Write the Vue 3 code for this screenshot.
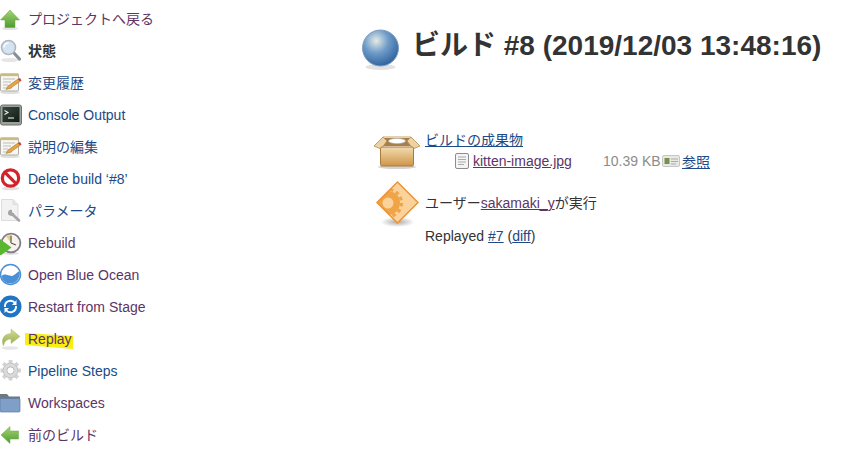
<template>
  <div class="page">
    <aside class="side">
      <div v-for="item in tasks" :key="item.label" class="task">
        <span class="ico">
          <svg v-if="item.icon === 'up'" viewBox="0 0 24 24" width="24" height="24">
            <defs><linearGradient id="gr" x1="0" y1="0" x2="0" y2="1"><stop offset="0" stop-color="#a4d676"/><stop offset="1" stop-color="#4f9a2e"/></linearGradient></defs>
            <ellipse cx="10" cy="21.5" rx="8" ry="1.6" fill="#e2e2e2"/>
            <path d="M10 3 L19.5 13 H15 V20.5 H5 V13 H.5 Z" fill="url(#gr)" stroke="#6aa845" stroke-width=".5"/>
          </svg>
          <svg v-else-if="item.icon === 'search'" viewBox="0 0 24 24" width="24" height="24">
            <ellipse cx="10" cy="21" rx="9" ry="2" fill="#e6e6e6"/>
            <path d="M13 13 L19.5 20" stroke="#8a8f94" stroke-width="3.2" stroke-linecap="round"/>
            <circle cx="8.5" cy="8.5" r="7" fill="#d4e3f3" stroke="#b0b8be" stroke-width="1.6"/>
            <path d="M4 8.5a4.5 4.5 0 0 1 4.5-4.5" fill="none" stroke="#fff" stroke-width="1.4"/>
          </svg>
          <svg v-else-if="item.icon === 'notes'" viewBox="0 0 24 24" width="24" height="24">
            <ellipse cx="10" cy="21.5" rx="10" ry="1.6" fill="#e0e0e0"/>
            <rect x="0.5" y="3" width="18" height="17" rx="1" fill="#f6f6f2" stroke="#aeaea6"/>
            <rect x="0.5" y="2.5" width="18" height="2.6" fill="#cdbb7e"/>
            <path d="M3 8h12M3 11h8M3 14h5M3 17h9" stroke="#bcbcbc"/>
            <path d="M6 18.5 L8 15 L18 8 L20 10.5 L10 17.5 Z" fill="#e2a548" stroke="#a86c20" stroke-width=".5"/>
            <path d="M18 8 L20 10.5 L21.5 9.5 L20 7 Z" fill="#d9363a"/>
          </svg>
          <svg v-else-if="item.icon === 'term'" viewBox="0 0 24 24" width="24" height="24">
            <defs><linearGradient id="scr" x1="0" y1="0" x2="1" y2="1"><stop offset="0" stop-color="#39493f"/><stop offset="1" stop-color="#121a15"/></linearGradient></defs>
            <rect x="0.5" y="2" width="21" height="20" rx="2" fill="#9ba19b" stroke="#6c726c"/>
            <rect x="2.5" y="4" width="17" height="15" fill="url(#scr)"/>
            <path d="M4.5 7.5 L8 9.5 L4.5 11.5" fill="none" stroke="#e8efe8" stroke-width="1.1"/>
            <path d="M8 15h6" stroke="#e8efe8" stroke-width="1.1"/>
            <path d="M13 20.5h2" stroke="#7ac060"/>
          </svg>
          <svg v-else-if="item.icon === 'stop'" viewBox="0 0 24 24" width="24" height="24">
            <ellipse cx="10.5" cy="21.5" rx="9" ry="1.8" fill="#e0e0e0"/>
            <circle cx="10.5" cy="11" r="8.2" fill="#fff" stroke="#d2232a" stroke-width="3.2"/>
            <path d="M4.7 5.2 L16.3 16.8" stroke="#d2232a" stroke-width="3.2"/>
          </svg>
          <svg v-else-if="item.icon === 'param'" viewBox="0 0 24 24" width="24" height="24">
            <path d="M1.5 .5 H13 L18 5.5 V21.5 H1.5 Z" fill="#f2f2f2" stroke="#dcdcdc"/>
            <path d="M13 .5 V5.5 H18" fill="#e6e6e6" stroke="#dcdcdc"/>
            <path d="M11 14 L19 21.5" stroke="#a4a4a4" stroke-width="2.6" stroke-linecap="round"/>
            <path d="M12 11 A3 3 0 1 0 14 14 L12 14 Z" fill="#a4a4a4"/>
          </svg>
          <svg v-else-if="item.icon === 'rebuild'" viewBox="0 0 24 24" width="24" height="24">
            <ellipse cx="11" cy="22.5" rx="8" ry="1.4" fill="#e0e0e0"/>
            <circle cx="11" cy="12" r="9.4" fill="#f5f3ea" stroke="#7f7d8c" stroke-width="1.8"/>
            <path d="M11 12 L6 5 L12 3.5 Z" fill="#e6cf7a"/>
            <path d="M11 12 L11 5M11 12 L16 14" stroke="#555" stroke-width="1.1"/>
            <path d="M0 8 L11.5 16.5 L0 25 Z" fill="#58b62f"/>
          </svg>
          <svg v-else-if="item.icon === 'ocean'" viewBox="0 0 24 24" width="24" height="24">
            <circle cx="10.5" cy="11.5" r="10" fill="#fff" stroke="#4a90d9" stroke-width="1.5"/>
            <path d="M1.5 13 C6 9 10 15 14 12 C16 10.5 18 9 19.5 8 C21 14 16.5 20.5 10.5 20.5 C5.5 20.5 2 17 1.5 13 Z" fill="#4a90d9"/>
          </svg>
          <svg v-else-if="item.icon === 'restart'" viewBox="0 0 24 24" width="24" height="24">
            <circle cx="10.5" cy="11.5" r="11" fill="#1f75c4"/>
            <path d="M5 12 A5.6 5.6 0 0 1 15 8" fill="none" stroke="#fff" stroke-width="1.9"/>
            <path d="M16.5 5 V10 H12 Z" fill="#fff"/>
            <path d="M16 11 A5.6 5.6 0 0 1 6 15" fill="none" stroke="#fff" stroke-width="1.9"/>
            <path d="M4.5 18 V13 H9 Z" fill="#fff"/>
          </svg>
          <svg v-else-if="item.icon === 'replay'" viewBox="0 0 24 24" width="24" height="24">
            <defs><linearGradient id="rp" x1="0" y1="0" x2="0" y2="1"><stop offset="0" stop-color="#d6dc92"/><stop offset="1" stop-color="#8fac4e"/></linearGradient></defs>
            <ellipse cx="10" cy="21" rx="8.5" ry="1.8" fill="#e6e6e6"/>
            <path d="M11 2 L20 9.5 L11 16.5 V12 C7 12 4.5 14 3.5 19 C1 13 3 7 11 6.5 Z" fill="url(#rp)" stroke="#adbc70" stroke-width=".5"/>
          </svg>
          <svg v-else-if="item.icon === 'gear'" viewBox="0 0 24 24" width="24" height="24">
            <path d="M10.5 1V21.5M.5 11.5H21M3.2 4.2L17.8 18.8M17.8 4.2L3.2 18.8" stroke="#d4d4d4" stroke-width="3.8"/>
            <circle cx="10.5" cy="11.5" r="7.4" fill="#dadada" stroke="#c4c4c4"/>
            <circle cx="10.5" cy="11.5" r="3.6" fill="#fff" stroke="#bcbcbc"/>
          </svg>
          <svg v-else-if="item.icon === 'folder'" viewBox="0 0 24 24" width="24" height="24">
            <path d="M0 3 H7 L9 5.5 H20 V20 H0 Z" fill="#6f7780"/>
            <rect x="0" y="7.5" width="20" height="13.5" rx="1" fill="#7f9fc9" stroke="#5d7ba3" stroke-width=".7"/>
          </svg>
          <svg v-else-if="item.icon === 'left'" viewBox="0 0 24 24" width="24" height="24">
            <defs><linearGradient id="gr2" x1="0" y1="0" x2="0" y2="1"><stop offset="0" stop-color="#a4d676"/><stop offset="1" stop-color="#4f9a2e"/></linearGradient></defs>
            <path d="M1 12 L10 3.5 V8 H18.5 V16 H10 V20.5 Z" fill="url(#gr2)" stroke="#6aa845" stroke-width=".5"/>
          </svg>
        </span>
        <span class="label" :class="[item.tone, { mark: item.mark }]">{{ item.label }}</span>
      </div>
    </aside>

    <main class="main">
      <header class="head">
        <svg class="ball" viewBox="0 0 40 42" width="40" height="42">
          <defs>
            <radialGradient id="bl" cx=".38" cy=".3" r=".75">
              <stop offset="0" stop-color="#e6ebe6"/>
              <stop offset=".45" stop-color="#6f9cc8"/>
              <stop offset="1" stop-color="#2a5f9c"/>
            </radialGradient>
          </defs>
          <ellipse cx="20.5" cy="39" rx="15" ry="3" fill="#e2e2e2"/>
          <circle cx="20.5" cy="20" r="18" fill="url(#bl)" stroke="#7fa0c4"/>
        </svg>
        <h1>ビルド #8 (2019/12/03 13:48:16)</h1>
      </header>

      <section class="rows">
        <div class="row">
          <svg class="big" viewBox="0 0 48 40" width="48" height="40">
            <defs><linearGradient id="bx" x1="0" y1="0" x2="0" y2="1"><stop offset="0" stop-color="#f3dcb0"/><stop offset="1" stop-color="#cf9549"/></linearGradient></defs>
            <ellipse cx="24" cy="38" rx="19" ry="2" fill="#d4d4d4"/>
            <path d="M11 9 H37 L40 17 H8 Z" fill="#a87f4a"/>
            <ellipse cx="24" cy="12" rx="8.5" ry="2.6" fill="#fff" stroke="#bbb" stroke-width=".6"/>
            <path d="M10 8 L1 17 L8 20 L14 12 Z" fill="#eed2a2" stroke="#b58a4e" stroke-width=".8"/>
            <path d="M38 8 L47 17 L40 20 L34 12 Z" fill="#eed2a2" stroke="#b58a4e" stroke-width=".8"/>
            <path d="M10 8 H38" stroke="#c9a269"/>
            <rect x="7.5" y="18" width="33" height="19" rx="1.5" fill="url(#bx)" stroke="#a87b3e"/>
          </svg>
          <div class="art">
            <a class="lnk blue">ビルドの成果物</a>
            <div class="file">
              <svg viewBox="0 0 14 16" width="14" height="16">
                <rect x=".5" y=".5" width="13" height="15" rx="1.5" fill="#f4f4f4" stroke="#8c8c8c"/>
                <path d="M3 4h8M3 6.5h8M3 9h8M3 11.5h6" stroke="#aaa"/>
              </svg>
              <a class="lnk violet name">kitten-image.jpg</a>
              <span class="size">10.39 KB</span>
              <svg viewBox="0 0 18 12" width="18" height="12">
                <rect x=".5" y=".5" width="17" height="11" rx="1.5" fill="#e8e8e4" stroke="#c6c6c6"/>
                <rect x="2.5" y="3" width="5" height="6" fill="#7a8f4e"/>
                <path d="M9 4h7M9 6.5h7M9 9h5" stroke="#aaa"/>
              </svg>
              <a class="lnk blue view">参照</a>
            </div>
          </div>
        </div>

        <div class="row cause">
          <svg class="big" viewBox="0 0 48 52" width="48" height="52">
            <defs>
              <radialGradient id="sh"><stop offset="0" stop-color="#aaa"/><stop offset="1" stop-color="#fff"/></radialGradient>
              <clipPath id="dm"><path d="M24.5 1 L45 21.5 L24.5 42 L4 21.5 Z"/></clipPath>
            </defs>
            <ellipse cx="24.5" cy="41" rx="17" ry="5" fill="url(#sh)"/>
            <path d="M24.5 1 L45 21.5 L24.5 42 L4 21.5 Z" fill="#fbd29a"/>
            <g clip-path="url(#dm)">
              <circle cx="15" cy="22" r="12" fill="#efa547"/>
              <circle cx="15" cy="22" r="13.5" fill="none" stroke="#efa547" stroke-width="3" stroke-dasharray="3.5 3"/>
              <circle cx="15" cy="22" r="5.5" fill="#fbd29a"/>
            </g>
            <path d="M24.5 1 L45 21.5 L24.5 42 L4 21.5 Z" fill="none" stroke="#ee8f33" stroke-width="1.4"/>
          </svg>
          <div class="who">
            <div class="user">ユーザー<a class="lnk violet">sakamaki_y</a>が実行</div>
            <div class="replayed">Replayed <a class="lnk blue">#7</a> (<a class="lnk blue">diff</a>)</div>
          </div>
        </div>
      </section>
    </main>
  </div>
</template>

<script setup>
const tasks = [
  { label: 'プロジェクトへ戻る', icon: 'up', tone: 'violet' },
  { label: '状態', icon: 'search', tone: 'strong' },
  { label: '変更履歴', icon: 'notes', tone: 'blue' },
  { label: 'Console Output', icon: 'term', tone: 'blue' },
  { label: '説明の編集', icon: 'notes', tone: 'blue' },
  { label: 'Delete build ‘#8’', icon: 'stop', tone: 'blue' },
  { label: 'パラメータ', icon: 'param', tone: 'blue' },
  { label: 'Rebuild', icon: 'rebuild', tone: 'violet' },
  { label: 'Open Blue Ocean', icon: 'ocean', tone: 'violet' },
  { label: 'Restart from Stage', icon: 'restart', tone: 'violet' },
  { label: 'Replay', icon: 'replay', tone: 'violet', mark: true },
  { label: 'Pipeline Steps', icon: 'gear', tone: 'blue' },
  { label: 'Workspaces', icon: 'folder', tone: 'violet' },
  { label: '前のビルド', icon: 'left', tone: 'violet' }
]
</script>

<style scoped>
.page {
  display: flex;
  width: 854px;
  height: 454px;
  overflow: hidden;
  background: #fff;
  color: #333;
  font-family: "Liberation Sans", "Noto Sans CJK JP", sans-serif;
  font-size: 14px;
}

.side {
  width: 360px;
  flex: none;
  padding-top: 3px;
}

.task {
  display: flex;
  align-items: center;
  height: 32px;
}

.ico {
  display: flex;
  width: 24px;
  height: 24px;
  margin-right: 4px;
}

.label {
  position: relative;
  z-index: 0;
  line-height: 18px;
}

/* hand drawn marker stroke */
.mark {
  color: #4a4a20;
}

.mark::before {
  content: "";
  position: absolute;
  z-index: -1;
  left: -3px;
  top: 3px;
  width: 48px;
  height: 16px;
  background: #f8ee12;
  clip-path: polygon(0 0, 100% 19%, 100% 100%, 0 75%);
}

.violet { color: #5c3566; }
.blue { color: #204a87; }
.strong { color: #333; font-weight: 700; }

.main {
  flex: 1;
  min-width: 0;
}

.head {
  display: flex;
  align-items: flex-start;
  gap: 12px;
  padding-top: 28px;
}

.head h1 {
  margin: 0;
  font-size: 28px;
  line-height: 36px;
  font-weight: 700;
  white-space: nowrap;
  color: #333;
}

.rows {
  margin-top: 59px;
  padding-left: 13px;
}

.row {
  display: flex;
  gap: 4px;
}

.cause {
  margin-top: 10px;
}

.lnk {
  text-decoration: underline;
}

.file {
  display: flex;
  align-items: center;
  margin-top: 2px;
  margin-left: 30px;
}

.name {
  margin-left: 4px;
  width: 130px;
}

.size {
  width: 59px;
  color: #8c8c8c;
}

.view {
  margin-left: 2px;
}

.who {
  padding-top: 11px;
}

.replayed {
  margin-top: 16px;
}
</style>
